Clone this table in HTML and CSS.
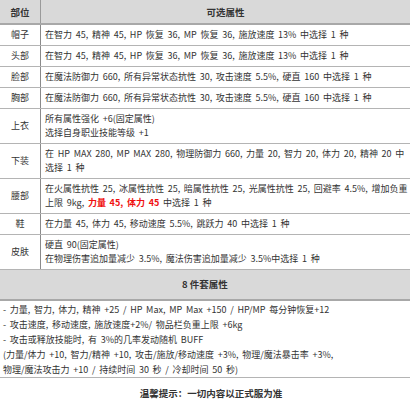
FILE: index.html
```html
<!DOCTYPE html>
<html lang="zh">
<head>
<meta charset="utf-8">
<link rel="stylesheet" href="styles.css">
</head>
<body>
<div class="page">
  <table class="attr">
    <thead>
      <tr><th class="part">部位</th><th class="opt">可选属性</th></tr>
    </thead>
    <tbody>
      <tr class="one"><td class="part">帽子</td><td>在智力 45, 精神 45, HP 恢复 36, MP 恢复 36, 施放速度 13% 中选择 1 种</td></tr>
      <tr class="one"><td class="part">头部</td><td>在智力 45, 精神 45, HP 恢复 36, MP 恢复 36, 施放速度 13% 中选择 1 种</td></tr>
      <tr class="one"><td class="part">脸部</td><td>在魔法防御力 660, 所有异常状态抗性 30, 攻击速度 5.5%, 硬直 160 中选择 1 种</td></tr>
      <tr class="one"><td class="part">胸部</td><td>在魔法防御力 660, 所有异常状态抗性 30, 攻击速度 5.5%, 硬直 160 中选择 1 种</td></tr>
      <tr class="two"><td class="part">上衣</td><td>所有属性强化 +6(固定属性)<br>选择自身职业技能等级 +1</td></tr>
      <tr class="two"><td class="part">下装</td><td>在 HP MAX 280, MP MAX 280, 物理防御力 660, 力量 20, 智力 20, 体力 20, 精神 20 中<br>选择 1 种</td></tr>
      <tr class="two"><td class="part">腰部</td><td>在火属性抗性 25, 冰属性抗性 25, 暗属性抗性 25, 光属性抗性 25, 回避率 4.5%, 增加负重<br>上限 9kg, <span class="hot">力量 45, 体力 45</span> 中选择 1 种</td></tr>
      <tr class="one"><td class="part">鞋</td><td>在力量 45, 体力 45, 移动速度 5.5%, 跳跃力 40 中选择 1 种</td></tr>
      <tr class="two"><td class="part">皮肤</td><td>硬直 90(固定属性)<br>在物理伤害追加量减少 3.5%, 魔法伤害追加量减少 3.5%中选择 1 种</td></tr>
    </tbody>
  </table>
  <div class="set-head">8 件套属性</div>
  <div class="set-body">
    <p>- 力量, 智力, 体力, 精神 +25 / HP Max, MP Max +150 / HP/MP 每分钟恢复+12</p>
    <p>- 攻击速度, 移动速度, 施放速度+2%/ 物品栏负重上限 +6kg</p>
    <p>- 攻击或释放技能时, 有 3%的几率发动随机 BUFF</p>
    <p>(力量/体力 +10, 智力/精神 +10, 攻击/施放/移动速度 +3%, 物理/魔法暴击率 +3%,</p>
    <p>物理/魔法攻击力 +10 / 持续时间 30 秒 / 冷却时间 50 秒)</p>
  </div>
  <div class="tip">温馨提示：一切内容以正式服为准</div>
</div>
</body>
</html>
```

FILE: styles.css
```css
html, body {
  margin: 0;
  padding: 0;
  background: #ffffff;
}

.page {
  width: 410px;
  font-family: "Noto Sans CJK SC", "Noto Sans", sans-serif;
  font-size: 9px;
  color: #333333;
}

.attr {
  width: 410px;
  border-collapse: collapse;
  table-layout: fixed;
}

.attr th {
  background: #d9d9d9;
  height: 23px;
  padding: 0;
  font-size: 9.5px;
  font-weight: bold;
  color: #333333;
  border-bottom: 2px solid #a8a8a8;
  text-align: center;
  vertical-align: middle;
}

.attr th.part {
  width: 40px;
  border-right: 1px solid #9a9a9a;
}

.attr td {
  padding: 3px 0 3px 4px;
  line-height: 14px;
  white-space: nowrap;
  word-spacing: 1.7px;
  border-bottom: 1px solid #b4b4b4;
  vertical-align: middle;
  text-align: left;
}

.attr td.part {
  padding: 0;
  text-align: center;
  border-right: 1px solid #8a8a8a;
}

.hot {
  color: #f01010;
  font-weight: bold;
}

.set-head {
  background: #d9d9d9;
  height: 29px;
  line-height: 29px;
  text-align: center;
  font-weight: bold;
  font-size: 9.5px;
  border-bottom: 2px solid #a8a8a8;
}

.set-body {
  padding: 1px 0 0 3px;
  border-bottom: 1px solid #b4b4b4;
}

.set-body p {
  margin: 0;
  line-height: 15px;
  white-space: nowrap;
  word-spacing: 1.7px;
}

.tip {
  text-align: center;
  font-weight: bold;
  font-size: 9.5px;
  line-height: 12px;
  padding-top: 9px;
  padding-left: 12px;
}
```
